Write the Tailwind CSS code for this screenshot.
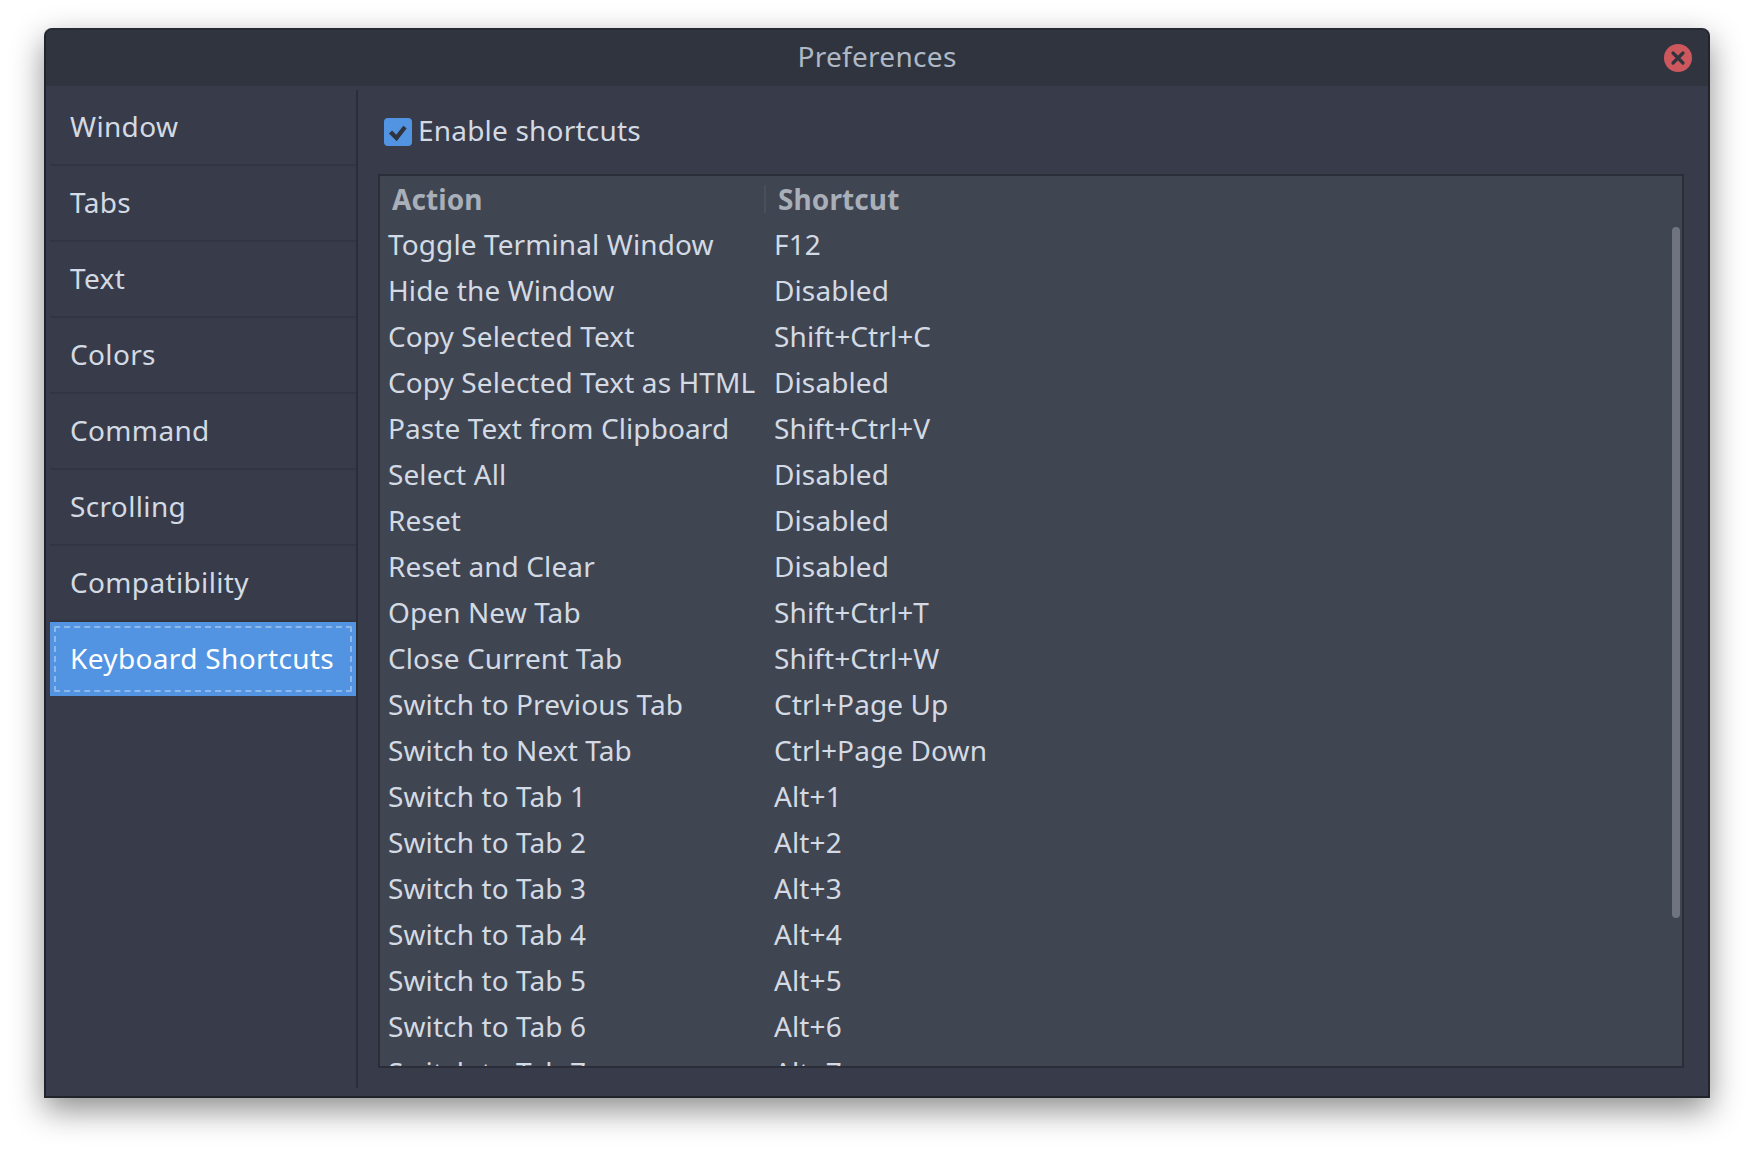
<!DOCTYPE html>
<html lang="en">
<head>
    <meta charset="UTF-8">
    <title>Preferences</title>
    <script src="https://cdn.jsdelivr.net/npm/@tailwindcss/browser@4"></script>
</head>
<body class="bg-white h-[1158px] overflow-hidden font-['Noto_Sans',sans-serif] text-[28px] tracking-[0.1px] text-[#d3dae3]">
<div class="pt-[28px] pl-[44px]">
    <!-- Window -->
    <div class="w-[1666px] h-[1070px] flex flex-col bg-[#383c4a] border-2 border-[#22242c] border-t-[#272a33] rounded-t-[8px] shadow-[0_12px_32px_rgba(0,0,0,0.45)] overflow-hidden">
        <!-- Title bar -->
        <div class="relative h-[56px] shrink-0 pb-[4px] bg-[#2f343f] flex items-center justify-center text-[#afb8c5] tracking-[0.3px]">
            Preferences
            <div class="absolute right-[16px] top-[14px] w-[28px] h-[28px] rounded-full bg-[#cc575d] flex items-center justify-center">
                <svg width="16" height="16" viewBox="0 0 16 16"><path d="M3 3 L13 13 M13 3 L3 13" stroke="#2f343f" stroke-width="3.2" stroke-linecap="round"/></svg>
            </div>
        </div>
        <div class="flex flex-1 min-h-0 pb-[8px]">
            <!-- Sidebar -->
            <div class="w-[312px] shrink-0 pl-[4px] border-r-2 border-[#2b2e39] mt-[4px] tracking-[0.35px]">
                <div class="h-[76px] flex items-center pl-[20px] pb-[2px] border-b-2 border-[#333642]">Window</div>
                <div class="h-[76px] flex items-center pl-[20px] pb-[2px] border-b-2 border-[#333642]">Tabs</div>
                <div class="h-[76px] flex items-center pl-[20px] pb-[2px] border-b-2 border-[#333642]">Text</div>
                <div class="h-[76px] flex items-center pl-[20px] pb-[2px] border-b-2 border-[#333642]">Colors</div>
                <div class="h-[76px] flex items-center pl-[20px] pb-[2px] border-b-2 border-[#333642]">Command</div>
                <div class="h-[76px] flex items-center pl-[20px] pb-[2px] border-b-2 border-[#333642]">Scrolling</div>
                <div class="h-[76px] flex items-center pl-[20px] pb-[2px] border-b-2 border-[#333642]">Compatibility</div>
                <div class="h-[74px] p-[4px] bg-[#5294e2] text-white">
                    <div class="h-full flex items-center pl-[14px] pb-[2px] border-2 border-dashed border-[#8db8ec] rounded-[2px]">Keyboard Shortcuts</div>
                </div>
            </div>
            <!-- Content -->
            <div class="flex-1 min-w-0 pl-[20px] pr-[24px]">
                <label class="h-[88px] pt-[3px] pl-[6px] flex items-center gap-[6px] tracking-[0.2px]">
                    <span class="w-[28px] h-[28px] rounded-[4px] bg-[#5294e2] flex items-center justify-center">
                        <svg width="28" height="28" viewBox="0 0 28 28"><path d="M6.5 14 L12.5 20 L21 9" fill="none" stroke="#2f343f" stroke-width="4.4"/></svg>
                    </span>
                    <span class="pb-[4px]">Enable shortcuts</span>
                </label>
                <!-- Shortcut table -->
                <div class="relative h-[894px] bg-[#404552] border-2 border-[#2b2e39] overflow-hidden">
                    <div class="flex h-[46px] items-center font-bold text-[#a9afb9]">
                        <div class="w-[386px] h-[28px] pl-[12px] border-r-2 border-[#4a4f5c] flex items-center">Action</div>
                        <div class="pl-[12px]">Shortcut</div>
                    </div>
                    <div class="flex h-[46px] items-center pl-[8px] pb-[2px]"><div class="w-[386px]">Toggle Terminal Window</div><div>F12</div></div>
                    <div class="flex h-[46px] items-center pl-[8px] pb-[2px]"><div class="w-[386px]">Hide the Window</div><div>Disabled</div></div>
                    <div class="flex h-[46px] items-center pl-[8px] pb-[2px]"><div class="w-[386px]">Copy Selected Text</div><div>Shift+Ctrl+C</div></div>
                    <div class="flex h-[46px] items-center pl-[8px] pb-[2px]"><div class="w-[386px]">Copy Selected Text as HTML</div><div>Disabled</div></div>
                    <div class="flex h-[46px] items-center pl-[8px] pb-[2px]"><div class="w-[386px]">Paste Text from Clipboard</div><div>Shift+Ctrl+V</div></div>
                    <div class="flex h-[46px] items-center pl-[8px] pb-[2px]"><div class="w-[386px]">Select All</div><div>Disabled</div></div>
                    <div class="flex h-[46px] items-center pl-[8px] pb-[2px]"><div class="w-[386px]">Reset</div><div>Disabled</div></div>
                    <div class="flex h-[46px] items-center pl-[8px] pb-[2px]"><div class="w-[386px]">Reset and Clear</div><div>Disabled</div></div>
                    <div class="flex h-[46px] items-center pl-[8px] pb-[2px]"><div class="w-[386px]">Open New Tab</div><div>Shift+Ctrl+T</div></div>
                    <div class="flex h-[46px] items-center pl-[8px] pb-[2px]"><div class="w-[386px]">Close Current Tab</div><div>Shift+Ctrl+W</div></div>
                    <div class="flex h-[46px] items-center pl-[8px] pb-[2px]"><div class="w-[386px]">Switch to Previous Tab</div><div>Ctrl+Page Up</div></div>
                    <div class="flex h-[46px] items-center pl-[8px] pb-[2px]"><div class="w-[386px]">Switch to Next Tab</div><div>Ctrl+Page Down</div></div>
                    <div class="flex h-[46px] items-center pl-[8px] pb-[2px]"><div class="w-[386px]">Switch to Tab 1</div><div>Alt+1</div></div>
                    <div class="flex h-[46px] items-center pl-[8px] pb-[2px]"><div class="w-[386px]">Switch to Tab 2</div><div>Alt+2</div></div>
                    <div class="flex h-[46px] items-center pl-[8px] pb-[2px]"><div class="w-[386px]">Switch to Tab 3</div><div>Alt+3</div></div>
                    <div class="flex h-[46px] items-center pl-[8px] pb-[2px]"><div class="w-[386px]">Switch to Tab 4</div><div>Alt+4</div></div>
                    <div class="flex h-[46px] items-center pl-[8px] pb-[2px]"><div class="w-[386px]">Switch to Tab 5</div><div>Alt+5</div></div>
                    <div class="flex h-[46px] items-center pl-[8px] pb-[2px]"><div class="w-[386px]">Switch to Tab 6</div><div>Alt+6</div></div>
                    <div class="flex h-[46px] items-center pl-[8px] pb-[2px]"><div class="w-[386px]">Switch to Tab 7</div><div>Alt+7</div></div>
                    <!-- Overlay scrollbar -->
                    <div class="absolute right-[2px] top-[51px] w-[8px] h-[691px] rounded-full bg-[#6f7480]"></div>
                </div>
            </div>
        </div>
    </div>
</div>
</body>
</html>
